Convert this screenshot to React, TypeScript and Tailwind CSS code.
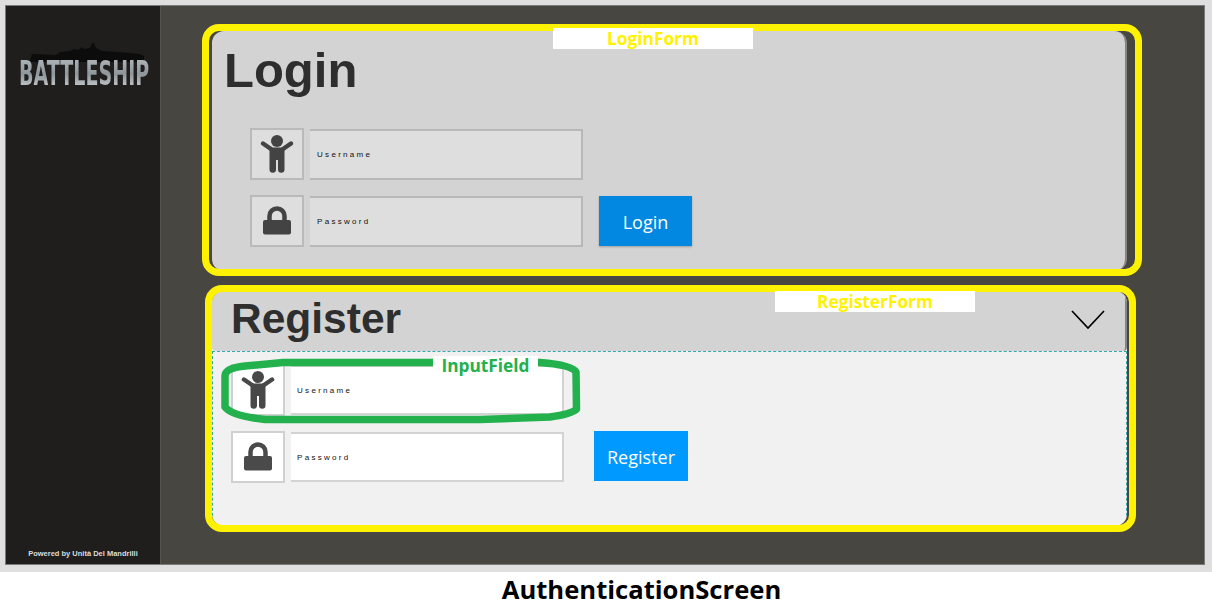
import React from "react";

const sans = "font-['Liberation_Sans',Arial,sans-serif]";

function Child({ className }: { className: string }) {
  return (
    <svg viewBox="2 2 50 48" className={`h-[48px] w-[50px] shrink-0 ${className}`} fill="currentColor" aria-hidden>
      <circle cx="27" cy="13" r="6" />
      <path d="M19.500 19.500h15V41.500a3 3 0 0 1-6.500 0V32h-2v9.500a3 3 0 0 1-6.500 0z" />
      <path d="M13 15.500l8 5.500M41 15.500l-8 5.500" stroke="currentColor" strokeWidth="4.500" strokeLinecap="round" fill="none" />
    </svg>
  );
}

function Lock({ className }: { className: string }) {
  return (
    <svg viewBox="2 2 50 48" className={`h-[48px] w-[50px] shrink-0 ${className}`} fill="currentColor" aria-hidden>
      <rect x="13" y="25" width="28" height="14.500" rx="2" />
      <path d="M19.500 26v-5a7.500 7.500 0 0 1 15 0v5" fill="none" stroke="currentColor" strokeWidth="4.500" />
    </svg>
  );
}

function Field({ kind, label, light }: { kind: "user" | "lock"; label: string; light: boolean }) {
  return (
    <div className="flex items-center gap-[6px]">
      <div
        className={
          light
            ? "flex h-[52px] w-[54px] items-center justify-center border-2 border-[#d0d0d0] bg-white"
            : "flex h-[52px] w-[54px] items-center justify-center border-2 border-[#bababa] bg-[#dedede]"
        }
      >
        {kind === "user" ? (
          <Child className={light ? "text-[#484848]" : "text-[#434343]"} />
        ) : (
          <Lock className={light ? "text-[#4a4a4a]" : "text-[#434343]"} />
        )}
      </div>
      <div
        className={
          light
            ? `flex h-[50px] w-[273px] items-center border-2 border-l-0 border-[#d3d3d3] bg-white pl-[6px] pt-[2px] text-[8px] tracking-[2.3px] text-[#111111] ${sans}`
            : `flex h-[51px] w-[273px] items-center border-2 border-l-0 border-[#b8b8b8] bg-[#dedede] pl-[7px] pt-[2px] text-[8px] tracking-[2.3px] text-[#111111] ${sans}`
        }
      >
        {label}
      </div>
    </div>
  );
}

export default function App() {
  return (
    <div className="relative h-[614px] w-[1212px] overflow-hidden bg-white">
      <div className="h-[572px] bg-[#dfdfdf] pl-[5px] pr-[7px] pt-[5px]">
        <div className="flex h-[560px] border border-[#7a7a7a] bg-[#484641]">
          <aside className="flex w-[155px] flex-col items-center border-r border-[#555450] bg-[#1f1e1d]">
            <div className="relative mt-[36px] h-[46px] w-[130px]">
              <svg viewBox="0 0 130 20" className="absolute left-0 top-0 h-[20px] w-[130px] text-[#0c0c0c]" fill="currentColor" aria-hidden>
                <path d="M12 18 L14 12 L38 13 L42 10 L52 9 L56 7 L60 8 L64 5 L66 7 L72 6 L74 1 L76 1 L78 6 L84 9 L100 10 L122 12 L126 14 L126 20 L10 20 Z" />
              </svg>
              <span
                className="absolute left-[1px] top-[12px] origin-left scale-x-[0.578] whitespace-nowrap bg-gradient-to-b from-[#b9bfc3] via-[#8e969b] to-[#dfe2e3] bg-clip-text font-['DejaVu_Sans',sans-serif] text-[33px] font-bold leading-[40px] text-transparent"
              >
                BATTLESHIP
              </span>
            </div>
            <div className={`mt-auto mb-[5px] whitespace-nowrap text-[7.500px] font-bold text-[#dddddd] ${sans}`}>
              Powered by Unità Del Mandrilli
            </div>
          </aside>

          <main className="flex flex-1 flex-col gap-[20px] pl-[51px] pt-[25px]">
            <section className="h-[240px] w-[915px] rounded-[12px] border-r-2 border-[#858585] bg-[#d3d3d3]">
              <h1 className={`pl-[12px] pt-[7px] text-[49px] font-bold leading-[64px] text-[#2e2e2e] ${sans}`}>Login</h1>
              <div className="flex flex-col gap-[15px] pl-[38px] pt-[26px]">
                <Field kind="user" label="Username" light={false} />
                <div className="flex items-center gap-[16px]">
                  <Field kind="lock" label="Password" light={false} />
                  <button className="h-[50px] w-[93px] bg-[#0288e0] pt-[2px] font-['Open_Sans',sans-serif] text-[18px] text-white shadow-[0_1px_2px_rgba(0,0,0,0.25)]">
                    Login
                  </button>
                </div>
              </div>
            </section>

            <section className="h-[235px] w-[915px] overflow-hidden rounded-[12px] bg-[#f1f1f1]">
              <header className="flex h-[60px] items-center justify-between rounded-b-[4px] border-r-2 border-[#858585] bg-[#d3d3d3] pl-[19px] pr-[20px]">
                <h2 className={`pb-[4px] text-[42.500px] font-bold leading-[56px] text-[#2e2e2e] ${sans}`}>Register</h2>
                <svg viewBox="0 0 34 20" className="mb-[2px] h-[20px] w-[34px] text-black" fill="none" stroke="currentColor" strokeWidth="1.700" aria-hidden>
                  <path d="M1 1l16 17L33 1" />
                </svg>
              </header>
              <div className="h-[175px] border-x border-t border-dashed border-[#35a9ad] pl-[18px] pt-[12px]">
                <div className="flex flex-col gap-[15px]">
                  <Field kind="user" label="Username" light />
                  <div className="flex items-center gap-[30px]">
                    <Field kind="lock" label="Password" light />
                    <button className="mb-[2px] h-[50px] w-[94px] bg-[#0099ff] pt-[2px] font-['Open_Sans',sans-serif] text-[18px] text-white">
                      Register
                    </button>
                  </div>
                </div>
              </div>
            </section>
          </main>
        </div>
      </div>

      <div className="flex h-[37px] items-center justify-center pl-[71px] font-['Open_Sans',sans-serif] text-[25.600px] font-bold text-black">
        AuthenticationScreen
      </div>

      {/* annotations lying over the screenshot */}
      <div className="pointer-events-none absolute left-[202px] top-[24px] h-[252px] w-[940px] rounded-[17px] border-[7px] border-[#fff200]" />
      <div className="pointer-events-none absolute left-[205px] top-[285px] h-[247px] w-[931px] rounded-[17px] border-[7px] border-[#fff200]" />
      <svg className="pointer-events-none absolute left-0 top-0" width="1212" height="614" fill="none" aria-hidden>
        <path
          d="M225 376 Q225 368 245 366 L283 362.500 L540 362.500 Q572 365 576 372 L576.500 409 Q572 414 550 417 L480 419.500 L265 419.500 Q232 416 225 407 Z"
          stroke="#22b14c"
          strokeWidth="7.500"
          strokeLinejoin="round"
        />
      </svg>
      <div className="absolute left-[553px] top-[28px] flex h-[21px] w-[200px] items-center justify-center bg-white font-['Open_Sans',sans-serif] text-[17.300px] font-bold text-[#fff200]">
        LoginForm
      </div>
      <div className="absolute left-[775px] top-[291px] flex h-[21px] w-[200px] items-center justify-center bg-white font-['Open_Sans',sans-serif] text-[17.300px] font-bold text-[#fff200]">
        RegisterForm
      </div>
      <div className="absolute left-[433px] top-[356px] flex h-[19px] w-[105px] items-center justify-center bg-white font-['Open_Sans',sans-serif] text-[17.300px] font-bold text-[#22b14c]">
        InputField
      </div>
    </div>
  );
}
